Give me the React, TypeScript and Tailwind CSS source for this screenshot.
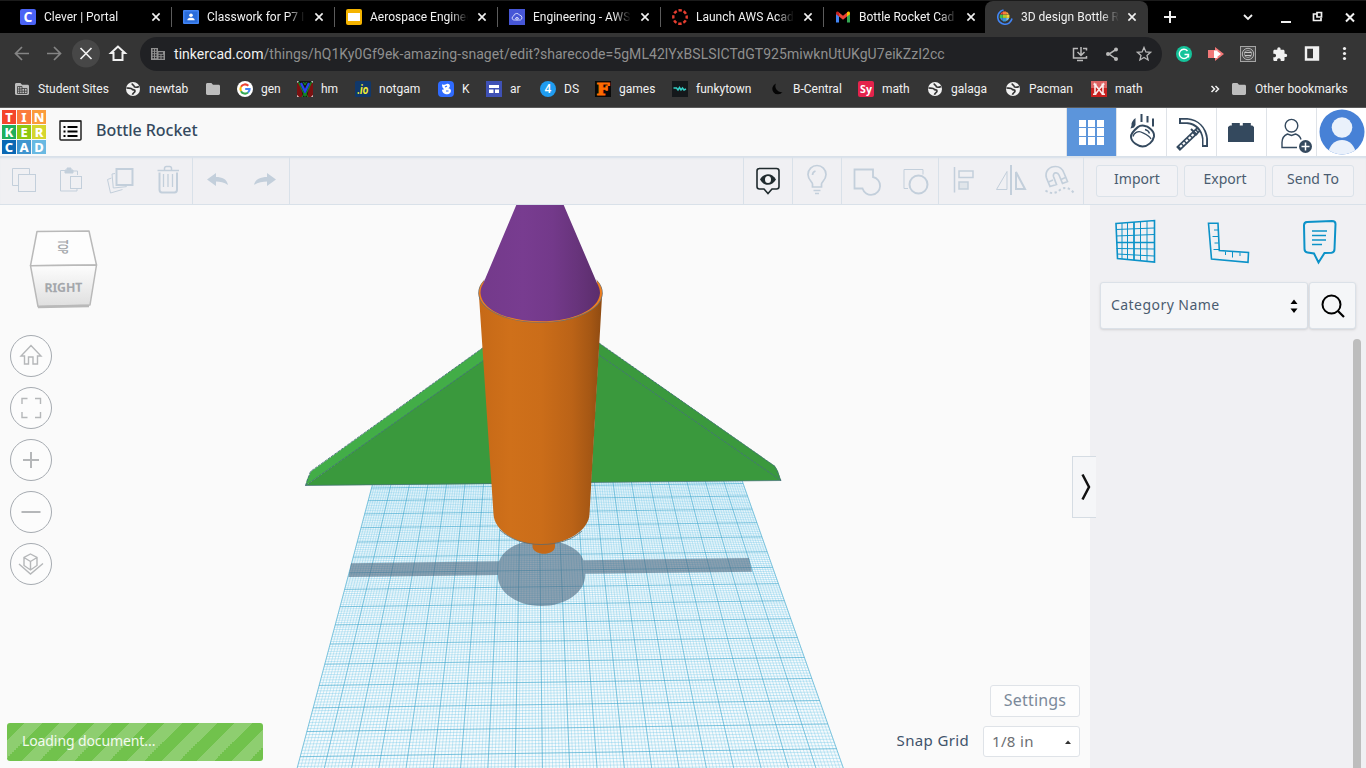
import React from "react";

type Kids = { children?: React.ReactNode };

function Art({ box, className, children }: Kids & { box: string; className: string }) {
  return (
    <svg viewBox={box} className={`block shrink-0 ${className}`} fill="none">
      {children}
    </svg>
  );
}

/* ---------- browser chrome ---------- */

const Cross = ({ className = "size-4" }: { className?: string }) => (
  <Art box="0 0 16 16" className={className}>
    <path d="M4.4 4.4l7.2 7.2M11.6 4.4l-7.2 7.2" stroke="#f1f1f1" strokeWidth="1.6" />
  </Art>
);

const CleverIcon = () => (
  <div className="flex size-4 shrink-0 items-center justify-center rounded-[2px] bg-[#4a63f5] font-['Open_Sans',sans-serif] text-[14px] leading-none font-bold text-white">C</div>
);
const ClassroomIcon = () => (
  <Art box="0 0 16 16" className="size-4">
    <rect y="1" width="16" height="14" rx="1" fill="#4285f4" />
    <rect x="1.5" y="2.5" width="13" height="11" fill="#2a6ddb" />
    <circle cx="8" cy="6.3" r="1.8" fill="#fff" />
    <path d="M4.3 11.3c0-2 2-2.6 3.7-2.6s3.700.6 3.700 2.600z" fill="#fff" />
  </Art>
);
const SlidesIcon = () => (
  <Art box="0 0 16 16" className="size-4">
    <rect width="16" height="16" rx="2" fill="#f5b400" />
    <rect x="2" y="4" width="12" height="8" fill="#fff" />
  </Art>
);
const AwsIcon = () => (
  <Art box="0 0 16 16" className="size-4">
    <rect width="16" height="16" fill="#4656d6" />
    <path d="M5.200 11H4.800A2 2 0 0 1 4.600 7.100 3.200 3.200 0 0 1 10.600 6.200 2.500 2.500 0 0 1 11.400 11H5.200zM6 9.700l2-1.400 2 1.400M8 8.300v3" stroke="#dfe3ff" strokeWidth=".9" />
  </Art>
);
const CanvasIcon = () => (
  <Art box="0 0 16 16" className="size-4">
    <circle cx="8" cy="8" r="6.700" stroke="#e63e30" strokeWidth="2.400" strokeDasharray="3.400 1.860" strokeDashoffset="1.700" />
  </Art>
);
const GmailIcon = () => (
  <Art box="0 0 16 16" className="size-4">
    <path d="M1 4v9.500h3V6.500z" fill="#4285f4" />
    <path d="M15 4v9.500h-3V6.500z" fill="#34a853" />
    <path d="M4 3.500L8 6.700l4-3.200v4L8 10.700 4 7.500z" fill="#ea4335" />
    <path d="M1 4.200C1 2.500 2.800 2 4 3.200v4.300L1 5.300z" fill="#c5221f" />
    <path d="M15 4.200C15 2.500 13.200 2 12 3.200v4.300l3-2.200z" fill="#fbbc04" />
  </Art>
);
const LoadingTabIcon = () => (
  <Art box="0 0 16 16" className="size-4">
    <path d="M6.500 1A7.200 7.200 0 1 0 15 9.500" stroke="#4285f4" strokeWidth="1.600" />
    <g transform="translate(-.3 -.3)">
      <path d="M3.600 5.900C4.200 4.300 5 3.500 6.100 3v2.900z" fill="#f04a32" />
      <path d="M6.300 2.800h3v3.100h-3z" fill="#fb7b3c" />
      <path d="M9.500 3c1.300.5 2.200 1.400 2.800 2.900H9.500z" fill="#fbab3c" />
      <path d="M3.200 6.100h2.900v3.100H3z" fill="#3cbf59" />
      <path d="M6.300 6.100h3v3.100h-3z" fill="#aacb2c" />
      <path d="M9.500 6.100h3.200v3.100H9.500z" fill="#f2d53c" />
      <path d="M3.500 9.400h2.600v3c-1.300-.6-2.200-1.600-2.600-3zM6.300 9.400h3v3.400h-3z" fill="#3793d6" />
      <path d="M9.500 9.400h3c-.4 1.400-1.500 2.500-3 3z" fill="#7cc4e8" />
    </g>
  </Art>
);

const tabs = [
  { title: "Clever | Portal", icon: <CleverIcon /> },
  { title: "Classwork for P7 I", icon: <ClassroomIcon /> },
  { title: "Aerospace Engineer", icon: <SlidesIcon /> },
  { title: "Engineering - AWS", icon: <AwsIcon /> },
  { title: "Launch AWS Acad", icon: <CanvasIcon /> },
  { title: "Bottle Rocket Cad -", icon: <GmailIcon /> },
];

const tabTitle = "ml-2 w-[98px] overflow-hidden text-xs whitespace-nowrap text-[#f1f1f1] [mask-image:linear-gradient(to_right,#000_82%,transparent)]";

function TabStrip() {
  return (
    <div className="flex h-[33px] border-t border-[#1b1b1b] bg-black pl-2">
      {tabs.map((t, i) => (
        <div key={t.title} className="flex w-[163px] items-center">
          <div className="ml-3 flex w-[151px] shrink-0 items-center">
            {t.icon}
            <span className={tabTitle}>{t.title}</span>
            <span className="ml-1.5"><Cross /></span>
          </div>
          {i < 5 && <div className="-mr-px h-5 w-px shrink-0 bg-[#5c5c5c]" />}
        </div>
      ))}
      <div className="-ml-px flex w-[163px] items-center rounded-t-lg bg-[#353535] pl-3">
        <LoadingTabIcon />
        <span className={tabTitle}>3D design Bottle R</span>
        <span className="ml-[5px]"><Cross /></span>
      </div>
      <Art box="1148 0 218 32" className="h-8 w-[218px]">
        <g stroke="#f1f1f1" strokeWidth="2">
          <path d="M1170 10v12M1164 16h12" />
          <path d="M1244 14l4 4 4-4" strokeWidth="1.800" />
          <path d="M1281 21h10" />
          <path d="M1317 13.500h-3.500v6.500h7.500v-2.500M1317 12h4.500v4.500h-4.500z" transform="translate(0 -.5)" strokeWidth="1.700" />
          <path d="M1346 12.500l8 8M1354 12.500l-8 8" />
        </g>
      </Art>
    </div>
  );
}

function AddressRow() {
  return (
    <div className="flex h-[42px] items-center">
      <Art box="0 33 140 42" className="h-[42px] w-[140px]">
        <circle cx="86" cy="53.500" r="14" fill="#474747" />
        <g strokeWidth="1.700">
          <path d="M29 53.500H16M22 47l-6.500 6.500L22 60" stroke="#858585" />
          <path d="M47 53.500h13M54 47l6.500 6.500L54 60" stroke="#858585" />
          <path d="M80.500 48l11 11M91.500 48l-11 11" stroke="#f1f1f1" />
          <path d="M118 46.500l-7 6.500h2.500v7h9v-7h2.500z" stroke="#f1f1f1" strokeWidth="2" />
        </g>
      </Art>
      <div className="flex h-[34px] w-[1022px] items-center rounded-full bg-[#202124]">
        <Art box="0 0 14 14" className="ml-[11px] size-[14px]">
          <path d="M0 1h7v3h7v9H0z" fill="#8f8f8f" />
          <path d="M1.500 3h1.500M4 3h1.500M1.500 5.500h1.500M4 5.500h1.500M1.500 8h1.500M4 8h1.500M1.500 10.500h1.500M4 10.500h1.500M7.500 6h4.500M7.500 8.500h2M10.500 8.500h2M7.500 11h2M10.500 11h2" stroke="#202124" strokeWidth="1.300" />
        </Art>
        <span className="ml-[9px] w-[896px] text-sm tracking-[.05px] whitespace-nowrap text-[#8f8f8f]">
          <span className="text-[#f1f1f1]">tinkercad.com</span>/things/hQ1Ky0Gf9ek-amazing-snaget/edit?sharecode=5gML42lYxBSLSICTdGT925miwknUtUKgU7eikZzI2cc
        </span>
        <Art box="1070 37 90 34" className="h-[34px] w-[90px]">
          <g stroke="#b9b9b9" strokeWidth="1.500">
            <path d="M1078 48.500h-4.500v9.500h13v-2M1077 60.500h6M1081 47v8M1077.500 52l3.500 3.500 3.500-3.500M1083 48.500h3.500v2" />
            <path d="M1116 49.500l-7 4.500 7 5" />
            <path d="M1144 47.500l1.900 4.400 4.700.4-3.600 3.100 1.100 4.600-4.100-2.500-4.100 2.500 1.100-4.600-3.600-3.100 4.700-.4z" strokeWidth="1.300" />
          </g>
          <g fill="#b9b9b9"><circle cx="1116" cy="49.500" r="2" /><circle cx="1108" cy="54" r="2" /><circle cx="1116" cy="59" r="2" /></g>
        </Art>
      </div>
      <Art box="1162 33 204 42" className="h-[42px] w-[204px]">
        <circle cx="1184" cy="54" r="8" fill="#15c39a" />
        <path d="M1187.500 51a4.600 4.600 0 1 0 1 3.500h-4M1188.500 54.500v3" stroke="#fff" strokeWidth="1.400" />
        <path d="M1208 50h7v-3l9 7-9 7v-3h-7z" fill="#f27878" />
        <path d="M1214 50.500h3.500v1l3.500 2.500-3.500 2.500v1.500h-3.500z" fill="#fff" />
        <rect x="1240.500" y="46.500" width="15" height="15" fill="#4b4b4b" stroke="#a5a5a5" />
        <circle cx="1248" cy="54" r="5.700" stroke="#b8b8b8" />
        <circle cx="1248" cy="54" r="3.600" stroke="#a8a8a8" strokeWidth=".8" />
        <path d="M1244.500 52.500h7M1245 55.500h6" stroke="#c8c8c8" strokeWidth="1" />
        <path transform="translate(1272 46.500) scale(.66)" d="M20.500 11H19V7c0-1.100-.9-2-2-2h-4V3.500a2.500 2.500 0 0 0-5 0V5H4c-1.100 0-2 .9-2 2v3.800h1.500c1.500 0 2.700 1.200 2.700 2.700S5 16.200 3.500 16.200H2V20c0 1.100.9 2 2 2h3.800v-1.500c0-1.500 1.200-2.700 2.700-2.700s2.700 1.200 2.700 2.700V22H17c1.100 0 2-.9 2-2v-4h1.500a2.500 2.500 0 0 0 0-5z" fill="#f1f1f1" />
        <path d="M1306 47.500h12v12h-12z" stroke="#f1f1f1" strokeWidth="2.400" />
        <path d="M1313 47h5v13h-5z" fill="#f1f1f1" />
        <g fill="#f1f1f1"><circle cx="1344.500" cy="48.500" r="1.600" /><circle cx="1344.500" cy="53.500" r="1.600" /><circle cx="1344.500" cy="58.500" r="1.600" /></g>
      </Art>
    </div>
  );
}

const Folder = ({ sites = false }: { sites?: boolean }) => (
  <Art box="0 0 16 16" className="size-4">
    <path d="M1 3.500C1 2.700 1.600 2 2.400 2h4L8 3.700h5.600c.8 0 1.400.6 1.400 1.400v7.500c0 .8-.6 1.400-1.400 1.400H2.400C1.600 14 1 13.400 1 12.600z" fill="#bdbdbd" />
    {sites && <path d="M3.500 5.500v7h9.500v-5H8v-2zM8 7v5.500M3.500 8H8M3.500 10.200h9.500M5.700 5.500v7M10.500 7.500v5" stroke="#3a3a3a" strokeWidth=".8" />}
  </Art>
);
const Globe = () => (
  <Art box="0 0 16 16" className="size-4">
    <circle cx="8" cy="8" r="7" fill="#f1f1f1" />
    <path d="M1.500 7c3 .2 5-.2 5.500 1 .8 1.600 3 .3 3 2s-2 1.500-2.500 3.700M14 5.500c-2 1-5 1.200-5-.5C9 4 7.500 4.500 7 2.500" stroke="#353535" strokeWidth="1.700" />
  </Art>
);
const GoogleG = () => (
  <Art box="0 0 16 16" className="size-4">
    <circle cx="8" cy="8" r="8" fill="#fff" />
    <g strokeWidth="2.100">
      <path d="M11.300 4.800A4.600 4.600 0 0 0 4 5.800" stroke="#ea4335" />
      <path d="M4 5.800a4.600 4.600 0 0 0 0 4.400" stroke="#fbbc05" />
      <path d="M4 10.200a4.600 4.600 0 0 0 7 1.300" stroke="#34a853" />
      <path d="M11 11.500A4.600 4.600 0 0 0 12.600 8H8.200" stroke="#4285f4" />
    </g>
  </Art>
);
const HmIcon = () => (
  <Art box="0 0 16 16" className="size-4">
    <rect width="16" height="16" fill="#171717" />
    <path d="M0 2h3l3 14H0zM16 2h-3l-3 14h6z" fill="#7c1212" />
    <path d="M1.500 1L8 15l6.500-14" stroke="#128a22" strokeWidth="1.300" />
    <path d="M4 2l4 8.500L12 2" stroke="#2744ee" strokeWidth="2.300" />
    <path d="M5 16l3-4 3 4M6.500 1L8 4l1.500-3" stroke="#15912a" />
    <path d="M0 2V0h2M14 0h2v2M0 14v2h2M14 16h2v-2" stroke="#eee" />
  </Art>
);
const IoIcon = () => (
  <Art box="0 0 16 16" className="size-4">
    <rect width="16" height="16" rx="1.500" fill="#10386b" />
    <text x="7.700" y="12.800" textAnchor="middle" fontFamily="Roboto, sans-serif" fontWeight="bold" fontStyle="italic" fontSize="13" textLength="11" lengthAdjust="spacingAndGlyphs" fill="#f5ee31">.io</text>
  </Art>
);
const KIcon = () => (
  <Art box="0 0 16 16" className="size-4">
    <rect width="16" height="16" rx="4" fill="#2f6bff" />
    <path d="M4 3.200c2 1.200 3.500.4 4.500-.2 3-1.500 5 2.500 1.800 4.200 4 .3 3.200 6-.8 6-3.500 0-5.500-2-5.500-4.800 1 .4 1.500.3 2-.5C4.600 7 4 5.500 4 3.200z" fill="#fff" />
    <path d="M7 6l2-1M8 10h2.500" stroke="#2f6bff" strokeWidth="1.200" />
  </Art>
);
const ArIcon = () => (
  <Art box="0 0 16 16" className="size-4">
    <rect width="16" height="16" fill="#3f51b5" />
    <path d="M3 4h10v3H3zM3 8.500h4.500V12H3zM9 8.500h4V12H9z" fill="#fff" />
  </Art>
);
const DsIcon = () => (
  <div className="flex size-4 shrink-0 items-center justify-center rounded-full bg-[#1f9cf0] text-[12px] leading-none font-medium text-white">4</div>
);
const GamesIcon = () => (
  <Art box="0 0 16 16" className="size-4">
    <rect width="16" height="16" fill="#090909" />
    <text x="8" y="14" textAnchor="middle" fontFamily="DejaVu Serif, serif" fontWeight="bold" fontSize="16" textLength="13" lengthAdjust="spacingAndGlyphs" fill="#ff6a00" stroke="#ff6a00" strokeWidth="1">F</text>
  </Art>
);
const FunkyIcon = () => (
  <Art box="0 0 16 16" className="size-4">
    <rect width="16" height="16" fill="#14181b" />
    <path d="M1.500 7h3l1.500 2 1.500-2.500L9 9l1.500-2 1.500 2 2-1" stroke="#34cfc6" strokeWidth="1.500" />
  </Art>
);
const MoonIcon = () => (
  <Art box="0 0 16 16" className="size-4">
    <path d="M7 2.500a5.600 5.600 0 1 0 6.500 8.500A6 6 0 0 1 7 2.500z" fill="#050505" />
  </Art>
);
const SyIcon = () => (
  <div className="flex size-4 shrink-0 items-center justify-center rounded-[2px] bg-[#e4234c] font-['Open_Sans',sans-serif] text-[10.5px] leading-none font-bold text-white">Sy</div>
);
const MathIcon = () => (
  <Art box="0 0 16 16" className="size-4">
    <rect width="16" height="16" fill="#c8201f" />
    <path d="M0 0h16v7H0z" fill="#dd6262" />
    <path d="M4 13V3.500l7.500 9.500M12 13V3.500L4.500 13M2 13.200h3.500M10.500 13.200H14M2.500 3.300h3M10.500 3.300h3" stroke="#fff" strokeOpacity=".9" strokeWidth="1.600" />
  </Art>
);

const bookmarks: { label: string; icon: React.ReactNode; w: string }[] = [
  { label: "Student Sites", icon: <Folder sites />, w: "w-[111px]" },
  { label: "newtab", icon: <Globe />, w: "w-[80px]" },
  { label: "", icon: <Folder />, w: "w-[32px]" },
  { label: "gen", icon: <GoogleG />, w: "w-[60px]" },
  { label: "hm", icon: <HmIcon />, w: "w-[58px]" },
  { label: "notgam", icon: <IoIcon />, w: "w-[83px]" },
  { label: "K", icon: <KIcon />, w: "w-[48px]" },
  { label: "ar", icon: <ArIcon />, w: "w-[54px]" },
  { label: "DS", icon: <DsIcon />, w: "w-[55px]" },
  { label: "games", icon: <GamesIcon />, w: "w-[77px]" },
  { label: "funkytown", icon: <FunkyIcon />, w: "w-[97px]" },
  { label: "B-Central", icon: <MoonIcon />, w: "w-[89px]" },
  { label: "math", icon: <SyIcon />, w: "w-[69px]" },
  { label: "galaga", icon: <Globe />, w: "w-[78px]" },
  { label: "Pacman", icon: <Globe />, w: "w-[86px]" },
  { label: "math", icon: <MathIcon />, w: "w-[119px]" },
];

function BookmarkRow() {
  return (
    <div className="flex h-[33px] items-center border-b border-[#5a5a5a] pb-1 pl-[14px] text-xs whitespace-nowrap text-[#f1f1f1]">
      {bookmarks.map((b, i) => (
        <div key={i} className={`flex shrink-0 items-center gap-2 ${b.w}`}>
          {b.icon}
          {b.label && <span>{b.label}</span>}
        </div>
      ))}
      <Art box="0 0 10 10" className="size-[10px]">
        <path d="M1.500 2l3 3-3 3M5.500 2l3 3-3 3" stroke="#f1f1f1" strokeWidth="1.500" />
      </Art>
      <div className="ml-[11px] flex items-center gap-2"><Folder /><span className="tracking-[.05px]">Other bookmarks</span></div>
    </div>
  );
}

/* ---------- application header ---------- */

const logo = [
  ["T", "bg-[#f4452c]"], ["I", "bg-[#fb7b3c]"], ["N", "bg-[#fb9c3c]"],
  ["K", "bg-[#1fae5b]"], ["E", "bg-[#8fc810]"], ["R", "bg-[#d6d62e]"],
  ["C", "bg-[#0a68b4]"], ["A", "bg-[#3f95cf]"], ["D", "bg-[#69b9e2]"],
];

const navCell = "w-[50px] border-r border-[#dfe3e8] bg-white";

function Header() {
  return (
    <header className="flex h-[48px] items-stretch bg-[#f9f9f9]">
      <div className="mt-[2px] ml-[2px] grid size-[44px] grid-cols-3 gap-px">
        {logo.map(([c, bg]) => (
          <div key={c} className={`flex items-center justify-center text-[13px] leading-none font-extrabold text-white ${bg}`}>{c}</div>
        ))}
      </div>
      <Art box="58 119 24 24" className="mt-[11px] ml-[12px] size-6">
        <rect x="60" y="121" width="21" height="19" rx="1" stroke="#222" strokeWidth="1.500" />
        <path d="M59.500 121h22" stroke="#222" strokeWidth="1.500" />
        <path d="M63.500 127h2M67.500 127h10M63.500 131.500h2M67.500 131.500h10M63.500 136h2M67.500 136h10" stroke="#000" strokeWidth="2" />
      </Art>
      <h1 className="mt-[11px] ml-[14px] w-[500px] text-[16px] leading-[22px] font-medium tracking-[-.05px] text-[#34495e]">Bottle Rocket</h1>
      <nav className="ml-auto flex">
        <div className="flex w-[51px] items-center justify-center border-x border-[#dfe3e8] bg-[#5c95db]">
          <div className="grid size-[25px] grid-cols-3 gap-[1.5px]">
            {logo.map(([c]) => <i key={c} className="bg-white" />)}
          </div>
        </div>
        <div className={navCell}>
          <Art box="1117 108 49 48" className="h-[48px] w-[49px]">
            <g stroke="#34495e">
              <path d="M1138 127c3-2.500 9-1.500 12 1.500 3 2.500 4.500 5 4 8-1 5-6 10-11.500 10-4 0-11-4-11.500-9.500-.3-4 4-7.500 7-10z" strokeWidth="2" />
              <path d="M1133 136.500c1-4 5-5.500 8-4.500 4 2 8 3 10 7M1145 129.500c2 .5 4 2 4.500 4" strokeWidth="1.300" />
              <path d="M1141.500 114v8M1147.500 116v6.500M1153 118.500v8" strokeWidth="2" />
            </g>
            <path d="M1135.500 118v7l-1.500 2.500-3.500 1 1-3c-.5-3 1.500-5.500 4-7.500z" fill="#34495e" />
          </Art>
        </div>
        <div className={navCell}>
          <Art box="1167 108 49 48" className="h-[48px] w-[49px]">
            <g stroke="#34495e">
              <path d="M1178 149l21-20" strokeWidth="5.500" />
              <path d="M1179 121h8c10 1 17 8 18 18v8" strokeWidth="6" />
              <g stroke="#fff">
                <path d="M1180 147l18-17" strokeWidth="2.200" strokeDasharray="2.600 1.400" />
                <path d="M1181 121h7c9 1 15 7 16.800 17v7" strokeWidth="2.600" />
              </g>
              <path d="M1191 129l6 6" strokeWidth="2" />
            </g>
          </Art>
        </div>
        <div className={navCell}>
          <Art box="1217 108 49 48" className="h-[48px] w-[49px]">
            <path d="M1228 142v-15l2-1.500h1.800V123h8v2.500h3V123h8v2.500h1.500l1.700 1.500v15z" fill="#34495e" />
          </Art>
        </div>
        <div className={navCell}>
          <Art box="1267 108 49 48" className="h-[48px] w-[49px]">
            <circle cx="1291.500" cy="125.700" r="6.300" stroke="#34495e" strokeWidth="1.400" />
            <path d="M1297 147.500h-15v-5c0-4 2-7 5.500-8.500l4 1.500 4-1.500c3 1 5 3.500 5.500 5.500" stroke="#34495e" strokeWidth="1.400" />
            <circle cx="1305.500" cy="146.500" r="6.500" fill="#34495e" />
            <path d="M1305.500 142.500v8M1301.500 146.500h8" stroke="#fff" strokeWidth="1.500" />
          </Art>
        </div>
        <div className="flex w-[49px] items-center bg-white">
          <Art box="0 0 46 46" className="ml-[1.500px] size-[46px]">
            <clipPath id="face"><circle cx="23" cy="23" r="22.500" /></clipPath>
            <g clipPath="url(#face)">
              <rect width="46" height="46" fill="#4781d6" />
              <circle cx="23" cy="18.500" r="10.300" fill="#eaf1fb" />
              <ellipse cx="23" cy="45" rx="13.500" ry="14" fill="#eaf1fb" />
            </g>
          </Art>
        </div>
      </nav>
    </header>
  );
}

/* ---------- tool bar ---------- */

function Tool({ x, dark, children }: Kids & { x: number; dark?: boolean }) {
  return (
    <svg viewBox={`${x - 24} 157 48 47`} className={`block h-[47px] w-12 shrink-0 ${dark ? "text-[#202b2e]" : "text-[#c3cfdb]"}`} fill="none" stroke="currentColor">
      {children}
    </svg>
  );
}

const group = "flex border-r border-[#d9e1e9]";

function Toolbar() {
  return (
    <div className="flex h-[49px] border-t border-b border-[#d9e1e9] bg-[#f0f0f3] shadow-[inset_0_2px_2px_-1px_#d5dfe9]">
      <div className={group}>
        <Tool x={24}><path d="M18.500 185.500h-6v-17h17v6" /><rect x="18.500" y="174.500" width="17" height="17" /></Tool>
        <Tool x={72}>
          <path d="M77.500 175v-4h-4.500M65 170.500h-4.500v20.500H77v-2.500" />
          <path d="M65 173v-3h2v-2h4v2h2v3z" fill="currentColor" />
          <rect x="70.500" y="176.500" width="11" height="12" />
        </Tool>
        <Tool x={120}>
          <rect x="116.500" y="169" width="16" height="16" strokeWidth="2" />
          <path d="M115 173.500l-3 .5 1.300 14 13-1.300v-1.500M111.500 178l-4 1.500 3 13.500 12-3.500" />
        </Tool>
        <Tool x={168}>
          <path d="M157.500 170.500h21.500M164.500 170v-1.500c0-1.500 1-2 2-2h3c1.500 0 2 .5 2 2v1.500" strokeWidth="1.500" />
          <path d="M159.500 172.500v17c0 2 1 3 2.500 3h12.500c1.500 0 2.500-1 2.500-3v-17" strokeWidth="2" />
          <path d="M163.500 174v13M168 174v13M172.500 174v13" strokeWidth="1.300" />
        </Tool>
      </div>
      <div className={group}>
        <Tool x={217}><path d="M207 179.500l9-6.500v4c6 0 11 2 12 8-4-3-8-3.500-12-3.500v4.500z" fill="currentColor" stroke="none" /></Tool>
        <Tool x={265}><path d="M276 179.500l-9-6.500v4c-6 0-12 2-13 8 4-3 9-3.500 13-3.500v4.500z" fill="currentColor" stroke="none" /></Tool>
      </div>
      <div className={`${group} ml-auto w-[454px] justify-end`} />
      <div className={group}>
        <Tool x={768} dark>
          <path d="M759 168.500h17.500c1.500 0 2.500 1 2.500 2.500v15.500c0 1.500-1 2.500-2.500 2.500H772l-4 4.500-4-4.500h-4.500c-1.500 0-2.500-1-2.500-2.500V171c0-1.500 1-2.500 2.500-2.500z" strokeWidth="1.600" />
          <path d="M760 179.500c4-7 12-7 16 0-4 7-12 7-16 0z" fill="currentColor" stroke="none" />
          <ellipse cx="768" cy="179.500" rx="3" ry="3.500" fill="#f5f5f6" stroke="none" />
        </Tool>
      </div>
      <div className={group}>
        <Tool x={817}>
          <path d="M812.500 187v-3c0-2-4.500-4-4.500-9.500a9 9 0 0 1 18 0c0 5.500-4.500 7.500-4.500 9.500v3zM812.500 175c0-2 1.500-3.500 3-4M813.500 190.500h7M815 193.500h4" strokeWidth="1.700" />
        </Tool>
      </div>
      <div className={group}>
        <Tool x={867}><path d="M855.500 169.500H874v7.500a9 9 0 1 1-10.500 11.500h-8z" strokeWidth="1.800" /></Tool>
        <Tool x={914}><path d="M908 188.500h-4v-19h19v5" /><circle cx="918.500" cy="184.500" r="9" strokeWidth="2" /></Tool>
      </div>
      <div className={group}>
        <Tool x={963}>
          <path d="M954.500 167v25.500" strokeWidth="1.500" />
          <rect x="959" y="171" width="14" height="6.500" strokeWidth="1.500" />
          <rect x="959" y="182" width="9" height="7" strokeWidth="1.500" fill="#e0e5ea" />
        </Tool>
        <Tool x={1011}>
          <path d="M1007 171.500v18h-10.500z" />
          <path d="M1011 165v30M1016 172v17h9z" strokeWidth="2" />
        </Tool>
        <Tool x={1059}>
          <path d="M1050 186.500l-3.500-8.500c-2-7 3-11.500 9-11.500 4.500 0 7 2.500 8.500 6.500l3.500 8.500-5 2-3.500-8.500c-1.500-3.500-6.500-2.500-5.500 1.500l3 8z" strokeWidth="1.700" />
          <path d="M1048.500 182l4.500-2M1061 179.500l4.500-2" strokeWidth="1.500" />
          <path d="M1045.500 190.500c6 4 10 3 15-1 5-3 9-1.500 13 3" strokeWidth="2" strokeDasharray="2.300 2.500" />
        </Tool>
      </div>
      <div className="flex items-center gap-1.5 px-[12px] text-sm text-[#4a5c70]">
        {["Import", "Export", "Send To"].map((l) => (
          <button key={l} className="h-8 w-[82px] rounded-[3px] border border-[#dbe2e9] bg-[#f2f2f5] pb-1">{l}</button>
        ))}
      </div>
    </div>
  );
}

/* ---------- 3D viewport ---------- */

type Pt = [number, number];

// Projective map taking the unit square to a quadrilateral.
function homography(p0: Pt, p1: Pt, p2: Pt, p3: Pt) {
  const sx = p0[0] - p1[0] + p2[0] - p3[0];
  const sy = p0[1] - p1[1] + p2[1] - p3[1];
  const dx1 = p1[0] - p2[0], dx2 = p3[0] - p2[0];
  const dy1 = p1[1] - p2[1], dy2 = p3[1] - p2[1];
  const det = dx1 * dy2 - dx2 * dy1;
  const g = (sx * dy2 - dx2 * sy) / det;
  const h = (dx1 * sy - sx * dy1) / det;
  const a = p1[0] - p0[0] + g * p1[0], b = p3[0] - p0[0] + h * p3[0];
  const d = p1[1] - p0[1] + g * p1[1], e = p3[1] - p0[1] + h * p3[1];
  return (u: number, v: number): Pt => {
    const w = g * u + h * v + 1;
    return [(a * u + b * v + p0[0]) / w, (d * u + e * v + p0[1]) / w];
  };
}

const project = homography([368.2, 500.7], [747.5, 496], [836.5, 748.7], [300.2, 756.7]);
const V0 = -2, V1 = 15.5;
const at = (u: number, v: number) => {
  const [x, y] = project(u / 20, v / 14);
  return `${x.toFixed(2)} ${y.toFixed(2)}`;
};
const range = (a: number, b: number, s: number) => Array.from({ length: Math.floor((b - a) / s) + 1 }, (_, i) => a + i * s);
const across = (s: number) => range(V0, V1, s).map((v) => `M${at(0, v)}L${at(20, v)}`).join("");
const along = (s: number) => range(0, 20, s).map((u) => `M${at(u, V0)}L${at(u, V1)}`).join("");

function Scene() {
  return (
    <svg viewBox="0 205 1090 563" className="absolute inset-0 h-[563px] w-[1090px]" fill="none">
      <defs>
        <linearGradient id="body" x1="479" x2="603" y1="0" y2="0" gradientUnits="userSpaceOnUse">
          <stop offset="0" stopColor="#c66917" /><stop offset=".25" stopColor="#cf701a" /><stop offset=".5" stopColor="#cb6d19" />
          <stop offset=".75" stopColor="#bb6317" /><stop offset=".9" stopColor="#a55714" /><stop offset="1" stopColor="#8d4a12" />
        </linearGradient>
        <linearGradient id="cone" x1="482" x2="600" y1="0" y2="0" gradientUnits="userSpaceOnUse">
          <stop offset="0" stopColor="#743a8b" /><stop offset=".35" stopColor="#783c90" /><stop offset=".6" stopColor="#73398a" />
          <stop offset=".8" stopColor="#68347c" /><stop offset="1" stopColor="#5b2d6c" />
        </linearGradient>
      </defs>
      <path d={`M${at(0, V0)}L${at(20, V0)}L${at(20, V1)}L${at(0, V1)}z`} fill="#f6fafc" />
      <path d={across(0.125)} stroke="#62c4e8" strokeOpacity=".42" strokeWidth=".8" />
      <path d={along(0.125)} stroke="#62c4e8" strokeOpacity=".42" strokeWidth=".8" />
      <path d={across(1) + along(1)} stroke="#2d9cc4" strokeOpacity=".5" strokeWidth=".9" />
      <path d="M351 563.200L499 561.300C503 549 520 540 541.500 540S580 549 583.500 560.200L749 558 752 571.700 585.200 573.700C586 592 566 606 541.500 606S497 592 498 574.900L348.500 577z" fill="#4c677e" fillOpacity=".6" />
      <path d="M305.500 485.500l1.500-6 4-8L484 347v15z" fill="#42ad47" />
      <path d="M305.500 485.500L484 360l10 124z" fill="#3a993d" />
      <path d="M599 343l176 123 3 5 3 9.500-190 2z" fill="#3a993d" />
      <path d="M305.500 485.500L484 360M599 355l182 125.500M305.500 485.500l5-14L484 347M599 343l176 123.500 6 14" stroke="#45707a" strokeWidth=".9" strokeDasharray="3 1" />
      <path d="M305.500 485.500L781 480.500" stroke="#45707a" strokeWidth=".7" />
      <path d="M532.500 543h22.500v4c-1 9-21 9-22.500 0z" fill="#c56817" />
      <path d="M478.800 293L493.500 514C494 530 515 544.500 541 544.500S589 530 589.500 514L602.200 293z" fill="url(#body)" />
      <path d="M500 530c10 9 24 14.500 41 14.500 18 0 31-5 41-13.500" stroke="#5e6a6c" strokeWidth=".8" />
      <ellipse cx="540.500" cy="293" rx="61.700" ry="29.200" fill="#e8781b" stroke="#77736d" strokeWidth="1.100" />
      <ellipse cx="540.500" cy="292.700" rx="60.700" ry="28.700" stroke="#f0801f" strokeWidth="1.300" />
      <path d="M487 262L484 283l113 0-3-21-31-60h-47z" fill="#fafafa" />
      <path d="M516.500 204.500L483 284C481 287 480.500 290 480.500 293 482 311 509 321.300 541 321.300S599 310 600 293C600 289 598.500 286 597 283L563.500 204.500z" fill="url(#cone)" />
    </svg>
  );
}

const navIcons = [
  <path d="M21 10.500l-10 10.500h3.500v8h4v-7h4.500v7h4.500v-8H31z" />,
  <path d="M12 17v-5.500h5.500M25 11.500h5.500V17M30.500 25v5.500H25M17.500 30.500H12V25" />,
  <path d="M21 13v16M13 21h16" strokeWidth="2" />,
  <path d="M11.500 21h19" strokeWidth="2" />,
  <path d="M20.500 11l6.500 3.500v8L20.500 27 14 22.500v-8zM14 14.500l6.500 4 6.500-4M20.500 18.500V27M9 21l11.500 10L33 20.500" />,
];

function Viewport() {
  return (
    <main className="relative flex w-[1090px] shrink-0 justify-between overflow-hidden bg-[#fafafa]">
      <Scene />
      <div className="relative flex flex-col pl-[7px]">
        <Art box="26 226 76 86" className="mt-[21px] ml-[19px] h-[86px] w-[76px]">
          <defs><linearGradient id="cube" x1="0" y1="0" x2="0" y2="1"><stop offset="0" stopColor="#fdfdfd" /><stop offset="1" stopColor="#dfdfdf" /></linearGradient></defs>
          <g stroke="#b9b9b9" strokeWidth="1.500" strokeLinejoin="round">
            <path d="M37 231.500l52-.5 7.500 34-66 .700z" fill="#fdfdfd" />
            <path d="M30.500 265.700l66-.7-6.500 40-52 1.500z" fill="url(#cube)" />
            <path d="M38 307l51-1" strokeWidth="2.500" />
          </g>
          <g fill="#a4a7ab" fontFamily="Noto Sans, sans-serif" fontWeight="bold" textAnchor="middle">
            <text transform="translate(63.500 292) rotate(-1)" fontSize="12.500" textLength="38">RIGHT</text>
            <text transform="translate(57.500 247) rotate(90) scale(.5 1)" fontSize="14.500" fontWeight="600">TOP</text>
          </g>
        </Art>
        <div className="mt-[23px] ml-[3px] flex flex-col gap-[10px]">
          {navIcons.map((icon, i) => (
            <button key={i} className="size-[42px] rounded-full border border-[#a6abb1] bg-[#fcfcfc]">
              <svg viewBox="1 1 40 40" className="size-10" fill="none" stroke="#b5b7b9" strokeWidth="1.400">{icon}</svg>
            </button>
          ))}
        </div>
        <div className="mt-auto mb-[7px] h-[38px] w-[256px] rounded-[3px] bg-[#71c24c] bg-[linear-gradient(135deg,transparent_0,transparent_25%,#8ece70_25%,#8ece70_50%,transparent_50%,transparent_75%,#8ece70_75%)] bg-[length:35px_35px] pl-[15px] text-sm leading-[36px] tracking-[-.1px] text-white/90">Loading document...</div>
      </div>
      <div className="relative mr-[10px] flex flex-col items-end justify-end pb-[11px]">
        <button className="h-8 w-[90px] rounded-[3px] border border-[#dfe3e8] bg-[#fdfdfd] pb-[3px] text-[16px] leading-none tracking-[.2px] text-[#7b899a]">Settings</button>
        <div className="mt-[9px] flex h-[31px] items-center">
          <span className="mr-[14px] pb-[3px] text-[15px] tracking-[.35px] text-[#3f536a]">Snap Grid</span>
          <div className="flex h-[31px] w-[97px] items-center justify-between rounded-[3px] border border-[#dfe3e8] bg-white pr-[8px] pb-px pl-2 text-[15px] tracking-[.35px] text-[#6d6f73]">
            1/8 in
            <Art box="0 0 6 4" className="mt-0.5 h-1 w-1.5"><path d="M0 4l3-3.500L6 4z" fill="#333" /></Art>
          </div>
        </div>
      </div>
    </main>
  );
}

/* ---------- shape panel ---------- */

function Panel() {
  return (
    <aside className="relative flex-1 bg-[#f0f0f3] pt-[10px]">
      <Art box="1100 215 260 52" className="ml-[10px] h-[52px] w-[260px]">
        <g stroke="#0c92c8" strokeWidth="1">
          <path d="M1116 223.500l38.500-3v41.500l-37-3.500z" strokeWidth="1.600" />
          <path d="M1122 223v36M1127.500 222.500v37M1134 222v38M1140.500 221.500v39M1147 221v40M1116 229.500l38-1.500M1116 236l38-1.500M1116.500 242.500h38M1116.500 248.500l38 .5M1117 254l37 2" />
          <path d="M1134 222v38M1116.500 242.500h38" strokeWidth="1.500" />
          <path d="M1208.500 223.300h9.500l1.300 27.200 29.200 2-.5 9.800-36.500-3.300z" strokeWidth="1.600" />
          <path d="M1214 230h4M1212.500 236.500h5.500M1214.500 243h4M1213.500 249.500h5.500M1225.500 251.500v3.500M1232.500 252v5.500M1240 252.500v3.500" />
          <path d="M1307 222l25-1c2 0 3.500 1 3.500 3l-1 25c0 2-1 3.500-3 3.700l-7 .3-6 9.500-4.500-9-6.500-1c-2-.3-3-1.500-3-3.500l-.5-23.500c0-2 1-3.400 3-3.500z" strokeWidth="2" />
          <path d="M1312 231h15M1312 235.500h14M1312 240h14M1312 244.500h10" strokeWidth="1.300" />
        </g>
      </Art>
      <div className="mt-[15px] ml-[10px] flex gap-px">
        <div className="flex h-[47px] w-[208px] items-center justify-between rounded-[3px] border border-[#dbe1e8] bg-[#f5f6f8] pr-[9px] pb-0.5 pl-[10px] text-sm tracking-[.45px] text-[#4a5c70] shadow-sm">
          Category Name
          <Art box="0 0 8 14" className="mt-0.5 h-[14px] w-2"><path d="M.5 5L4 .5 7.500 5zM.5 9.500L4 14l3.500-4.500z" fill="#000" /></Art>
        </div>
        <div className="flex h-[47px] w-[47px] items-center justify-center rounded-[3px] border border-[#dbe1e8] bg-[#f5f6f8] shadow-sm">
          <Art box="0 0 24 24" className="size-6"><circle cx="10.500" cy="10.500" r="9" stroke="#000" strokeWidth="2" /><path d="M17 17l6 6" stroke="#000" strokeWidth="2.200" /></Art>
        </div>
      </div>
      <div className="mt-[10px] mr-[5px] ml-auto h-[429px] w-2 rounded-t-full bg-[#bdbdbd]" />
      <div className="absolute top-[251px] -left-[18px] flex h-[62px] w-6 items-center justify-center border border-r-0 border-[#d5dce3] bg-[#f5f6f8]">
        <Art box="0 0 10 28" className="ml-0.5 h-7 w-[10px]"><path d="M1.500 1.500L8 14 1.500 26.500" stroke="#111" strokeWidth="2.500" /></Art>
      </div>
    </aside>
  );
}

export default function App() {
  return (
    <div className="flex h-[768px] w-[1366px] flex-col overflow-hidden bg-[#fafafa] font-['Noto_Sans',sans-serif]">
      <div className="flex shrink-0 flex-col bg-[#353535] font-[Roboto,sans-serif]">
        <TabStrip />
        <AddressRow />
        <BookmarkRow />
      </div>
      <Header />
      <Toolbar />
      <div className="flex h-[563px]">
        <Viewport />
        <Panel />
      </div>
    </div>
  );
}
